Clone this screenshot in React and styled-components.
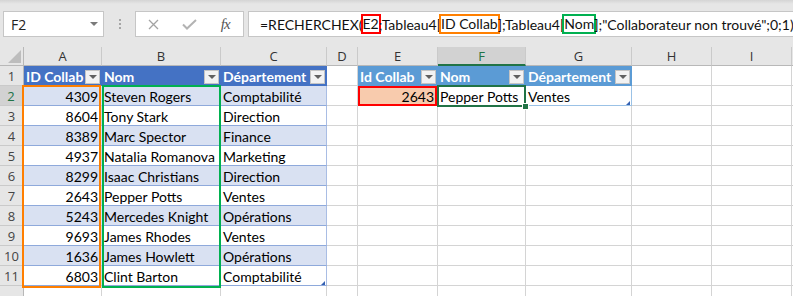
import React from "react";
import styled, { createGlobalStyle } from "styled-components";

const GlobalStyle = createGlobalStyle`
  html, body {
    margin: 0;
    padding: 0;
  }
  body {
    background: #e6e6e6;
    overflow: hidden;
    font-family: "Lato", "Liberation Sans", sans-serif;
  }
  *, *::before, *::after {
    box-sizing: border-box;
  }
`;

const TRACKS = "24px 78px 119px 106px 31px 80px 88px 106px 80px 80px 1fr";
const LETTERS = ["A", "B", "C", "D", "E", "F", "G", "H", "I", ""];

const staff = [
  [4309, "Steven Rogers", "Comptabilité"],
  [8604, "Tony Stark", "Direction"],
  [8389, "Marc Spector", "Finance"],
  [4937, "Natalia Romanova", "Marketing"],
  [8299, "Isaac Christians", "Direction"],
  [2643, "Pepper Potts", "Ventes"],
  [5243, "Mercedes Knight", "Opérations"],
  [9693, "James Rhodes", "Ventes"],
  [1636, "James Howlett", "Opérations"],
  [6803, "Clint Barton", "Comptabilité"],
];

const GRID = "#d4d4d4";

function App() {
  const rows = [];
  for (let r = 1; r <= 12; r++) {
    rows.push(
      <RowHead key={"h" + r} $selected={r === 2}>
        {r <= 11 ? r : ""}
      </RowHead>
    );
    for (let c = 0; c < 10; c++) {
      rows.push(<React.Fragment key={r + "-" + c}>{renderCell(r, c)}</React.Fragment>);
    }
  }

  return (
    <Window>
      <GlobalStyle />
      <FormulaBar>
        <NameBox>
          F2
          <Caret />
        </NameBox>
        <Grip>
          <Dot />
          <Dot />
          <Dot />
        </Grip>
        <ActionBox>
          <svg width="11" height="11" viewBox="0 0 11 11">
            <path d="M1 1 L10 10 M10 1 L1 10" stroke="#a3a3a3" strokeWidth="1.3" fill="none" />
          </svg>
          <svg width="15" height="11" viewBox="0 0 15 11">
            <path d="M1 5.5 L5 9.5 L14 1" stroke="#b3b3b3" strokeWidth="2" fill="none" />
          </svg>
          <FxLabel>fx</FxLabel>
        </ActionBox>
        <FormulaInput>
          =RECHERCHEX(<Ref $color="#ff0000">E2</Ref>;Tableau4[<Ref $color="#ff7f00">ID Collab</Ref>];Tableau4[
          <Ref $color="#00b050">Nom</Ref>];"Collaborateur non trouvé";0;1)
        </FormulaInput>
      </FormulaBar>

      <Stack>
        <Sheet>
          <Corner />
          {LETTERS.map((l, i) => (
            <ColHead key={i} $selected={l === "F"}>
              {l}
            </ColHead>
          ))}
          {rows}
        </Sheet>
        <Overlay>
          <RangeMark $col="2" $rows="3 / 13" $color="#ff7f00" $margin="-1px 1px -2px -2px" />
          <RangeMark $col="3" $rows="3 / 13" $color="#00b050" $margin="-1px 0 -2px 0" />
          <RangeMark $col="6" $rows="3" $color="#ff0000" $margin="0 1px 0 0" />
          <Selection />
        </Overlay>
      </Stack>
    </Window>
  );
}

function renderCell(r, c) {
  // table 1 : A1:C11
  if (c <= 2 && r === 1) {
    const label = ["ID Collab", "Nom", "Département"][c];
    return (
      <TableHead $tone="#4472c4">
        {label}
        <FilterButton />
      </TableHead>
    );
  }
  if (c <= 2 && r >= 2 && r <= 11) {
    const rec = staff[r - 2];
    const band = r % 2 === 0;
    const fill = band ? "#d9e1f2" : "#ffffff";
    return (
      <Cell
        $fill={fill}
        $hline="#8ea9db"
        $vline={c === 2 ? "#a9bde4" : band ? fill : GRID}
        $align={c === 0 ? "right" : "left"}
      >
        {rec[c]}
        {c === 2 && r === 11 && <ResizeHandle />}
      </Cell>
    );
  }
  // table 2 : E1:G2
  if (c >= 4 && c <= 6 && r === 1) {
    const label = ["Id Collab", "Nom", "Département"][c - 4];
    return (
      <TableHead $tone="#5b9bd5">
        {label}
        <FilterButton />
      </TableHead>
    );
  }
  if (c >= 4 && c <= 6 && r === 2) {
    const value = ["2643", "Pepper Potts", "Ventes"][c - 4];
    return (
      <Cell
        $fill={c === 4 ? "#f8cbad" : "#ffffff"}
        $hline="#9bc2e6"
        $vline={c === 6 ? "#9bc2e6" : GRID}
        $align={c === 4 ? "right" : "left"}
      >
        {value}
        {c === 6 && <ResizeHandle />}
      </Cell>
    );
  }
  return <Cell $fill="#ffffff" $hline={GRID} $vline={GRID} />;
}

export default App;

const Window = styled.div`
  width: 793px;
  height: 296px;
  overflow: hidden;
  background: #e6e6e6;
`;

const FormulaBar = styled.div`
  height: 47px;
  display: flex;
  align-items: flex-start;
  padding: 11px 0 0 3px;
  background: linear-gradient(#d4d4d4, #e6e6e6 4px);
`;

const NameBox = styled.div`
  flex: none;
  width: 101px;
  height: 26px;
  display: flex;
  align-items: center;
  justify-content: space-between;
  padding: 0 5px 0 7px;
  background: #ffffff;
  border: 1px solid #c6c6c6;
  font: 14px "Open Sans", sans-serif;
  color: #222;
`;

const Caret = styled.span`
  width: 0;
  height: 0;
  border-left: 4px solid transparent;
  border-right: 4px solid transparent;
  border-top: 4px solid #7a7a7a;
`;

const Grip = styled.div`
  flex: none;
  width: 31px;
  height: 26px;
  display: flex;
  flex-direction: column;
  align-items: center;
  justify-content: center;
  gap: 2px;
`;

const Dot = styled.span`
  width: 2px;
  height: 2px;
  background: #a6a6a6;
`;

const ActionBox = styled.div`
  flex: none;
  width: 109px;
  height: 26px;
  display: grid;
  grid-template-columns: repeat(3, 1fr);
  align-items: center;
  justify-items: center;
  background: #ffffff;
  border: 1px solid #c6c6c6;
`;

const FxLabel = styled.span`
  font: italic 15px "Liberation Serif", serif;
  color: #555;
  letter-spacing: -1px;
`;

const FormulaInput = styled.div`
  flex: 1;
  min-width: 0;
  overflow: hidden;
  height: 26px;
  margin-left: 4px;
  display: flex;
  align-items: center;
  padding-left: 11px;
  background: #ffffff;
  border: 1px solid #c6c6c6;
  border-right: none;
  font: 14px "Lato", sans-serif;
  color: #111;
  white-space: pre;
`;

const Ref = styled.span`
  display: inline-block;
  height: 16px;
  line-height: 16px;
  outline: 2px solid ${(p) => p.$color};
`;

const Stack = styled.div`
  display: grid;
  & > * {
    grid-area: 1 / 1;
  }
`;

const Sheet = styled.div`
  display: grid;
  grid-template-columns: ${TRACKS};
  grid-template-rows: 19px repeat(12, 20px);
  background: #ffffff;
`;

const Overlay = styled(Sheet)`
  position: relative;
  z-index: 2;
  background: transparent;
  pointer-events: none;
`;

const Corner = styled.div`
  position: relative;
  background: #e6e6e6;
  border-right: 1px solid #b8b8b8;
  border-bottom: 1px solid #b8b8b8;
  &::after {
    content: "";
    position: absolute;
    right: 2px;
    bottom: 2px;
    border-left: 13px solid transparent;
    border-bottom: 13px solid #bdbdbd;
  }
`;

const ColHead = styled.div`
  display: flex;
  align-items: center;
  justify-content: center;
  background: ${(p) => (p.$selected ? "#d2d2d2" : "#e6e6e6")};
  color: ${(p) => (p.$selected ? "#217346" : "#333")};
  border-right: 1px solid #cacaca;
  border-bottom: ${(p) => (p.$selected ? "2px solid #217346" : "1px solid #b8b8b8")};
  font: 13px "Open Sans", sans-serif;
`;

const RowHead = styled.div`
  display: flex;
  align-items: center;
  justify-content: center;
  background: ${(p) => (p.$selected ? "#d2d2d2" : "#e6e6e6")};
  color: ${(p) => (p.$selected ? "#217346" : "#444")};
  border-right: ${(p) => (p.$selected ? "2px solid #217346" : "1px solid #b8b8b8")};
  border-bottom: 1px solid #cacaca;
  font: 13px "Open Sans", sans-serif;
`;

const Cell = styled.div`
  position: relative;
  display: flex;
  align-items: center;
  justify-content: ${(p) => (p.$align === "right" ? "flex-end" : "flex-start")};
  padding: 1px 3px 0 2px;
  background: ${(p) => p.$fill};
  border-right: 1px solid ${(p) => p.$vline};
  border-bottom: 1px solid ${(p) => p.$hline};
  font: 14px/19px "Lato", sans-serif;
  color: #000;
  white-space: nowrap;
`;

const TableHead = styled.div`
  display: flex;
  align-items: center;
  justify-content: space-between;
  padding: 1px 2px 0 2px;
  background: ${(p) => p.$tone};
  font: 700 14px/19px "Lato", sans-serif;
  color: #ffffff;
  white-space: nowrap;
`;

const FilterButton = styled.span`
  flex: none;
  align-self: flex-end;
  margin-bottom: 2px;
  width: 15px;
  height: 14px;
  display: flex;
  align-items: center;
  justify-content: center;
  background: #f2f2f2;
  border: 1px solid #c4c4c4;
  &::after {
    content: "";
    border-left: 4px solid transparent;
    border-right: 4px solid transparent;
    border-top: 4px solid #606060;
  }
`;

const ResizeHandle = styled.span`
  position: absolute;
  right: 1px;
  bottom: 0;
  border-left: 4px solid transparent;
  border-bottom: 4px solid #3461b2;
`;

const RangeMark = styled.div`
  grid-column: ${(p) => p.$col};
  grid-row: ${(p) => p.$rows};
  margin: ${(p) => p.$margin};
  border: 2px solid ${(p) => p.$color};
`;

const Selection = styled.div`
  position: relative;
  grid-column: 7;
  grid-row: 3;
  margin: -1px 0 -1px -1px;
  border: 2px solid #217346;
  &::after {
    content: "";
    position: absolute;
    right: -5px;
    bottom: -5px;
    width: 7px;
    height: 7px;
    background: #217346;
    border: 1px solid #ffffff;
  }
`;
